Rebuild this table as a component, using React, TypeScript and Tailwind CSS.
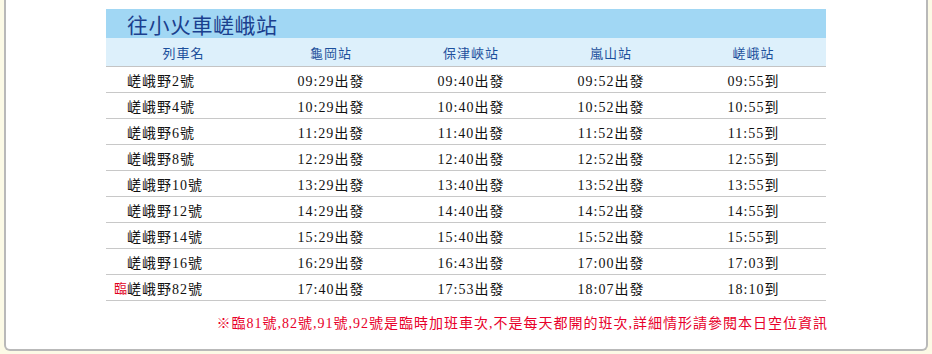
import React from 'react';

const ROWS = [
    { name: '嵯峨野2號', times: ['09:29出發', '09:40出發', '09:52出發', '09:55到'] },
    { name: '嵯峨野4號', times: ['10:29出發', '10:40出發', '10:52出發', '10:55到'] },
    { name: '嵯峨野6號', times: ['11:29出發', '11:40出發', '11:52出發', '11:55到'] },
    { name: '嵯峨野8號', times: ['12:29出發', '12:40出發', '12:52出發', '12:55到'] },
    { name: '嵯峨野10號', times: ['13:29出發', '13:40出發', '13:52出發', '13:55到'] },
    { name: '嵯峨野12號', times: ['14:29出發', '14:40出發', '14:52出發', '14:55到'] },
    { name: '嵯峨野14號', times: ['15:29出發', '15:40出發', '15:52出發', '15:55到'] },
    { name: '嵯峨野16號', times: ['16:29出發', '16:43出發', '17:00出發', '17:03到'] },
    { name: '嵯峨野82號', times: ['17:40出發', '17:53出發', '18:07出發', '18:10到'], extra: true },
];

const HEADERS = ['龜岡站', '保津峽站', '嵐山站', '嵯峨站'];

const COLS = 'grid grid-cols-[155px_140px_140px_140px_145px]';

export default function App() {
    return (
        <div className="w-[932px] h-[354px] bg-[#fcfae6] px-[4px] overflow-hidden">
            <div className="h-[351px] bg-white border-x-2 border-b-2 border-[#b9b9b9] rounded-b-[6px] pt-[9px] pl-[100px]">
                <div className="w-[720px]">
                    {/* title bar */}
                    <div className="h-[29px] bg-[#a1d7f4] pl-[21px] pt-[2px] flex items-center">
                        <h1 className="text-[21px] leading-none text-[#1b3f8e] tracking-[0.5px] font-['Noto_Sans_CJK_TC',sans-serif]">
                            往小火車嵯峨站
                        </h1>
                    </div>
                    {/* column header */}
                    <div className={`${COLS} h-[29px] pt-[2px] bg-[#ddf0fb] border-b border-[#c4c4c4] text-[13px] text-[#1c4f9c] tracking-[1px] font-['Noto_Sans_CJK_TC',sans-serif]`}>
                        <div className="flex items-center justify-center">列車名</div>
                        {HEADERS.map(h => (
                            <div key={h} className="flex items-center justify-center">{h}</div>
                        ))}
                    </div>
                    {/* rows */}
                    {ROWS.map(r => (
                        <div
                            key={r.name}
                            className={`${COLS} h-[26px] pt-[3px] border-b border-[#c8c8c8] text-[14px] text-[#111] tracking-[1px] font-['Liberation_Serif','Noto_Sans_CJK_TC',serif]`}
                        >
                            <div className="flex items-center pl-[21px]">
                                {r.extra && <span className="-ml-[13px] text-[13px] tracking-normal text-[#e0001b]">臨</span>}
                                {r.name}
                            </div>
                            {r.times.map((t, i) => (
                                <div key={i} className="flex items-center justify-center">{t}</div>
                            ))}
                        </div>
                    ))}
                    <p className="mt-[14px] text-right text-[14px] leading-[18px] text-[#e8002a] tracking-[1px] font-['Liberation_Serif','Noto_Sans_CJK_TC',serif] -mr-[2px]">
                        ※臨81號,82號,91號,92號是臨時加班車次,不是每天都開的班次,詳細情形請參閱本日空位資訊
                    </p>
                </div>
            </div>
        </div>
    );
}
